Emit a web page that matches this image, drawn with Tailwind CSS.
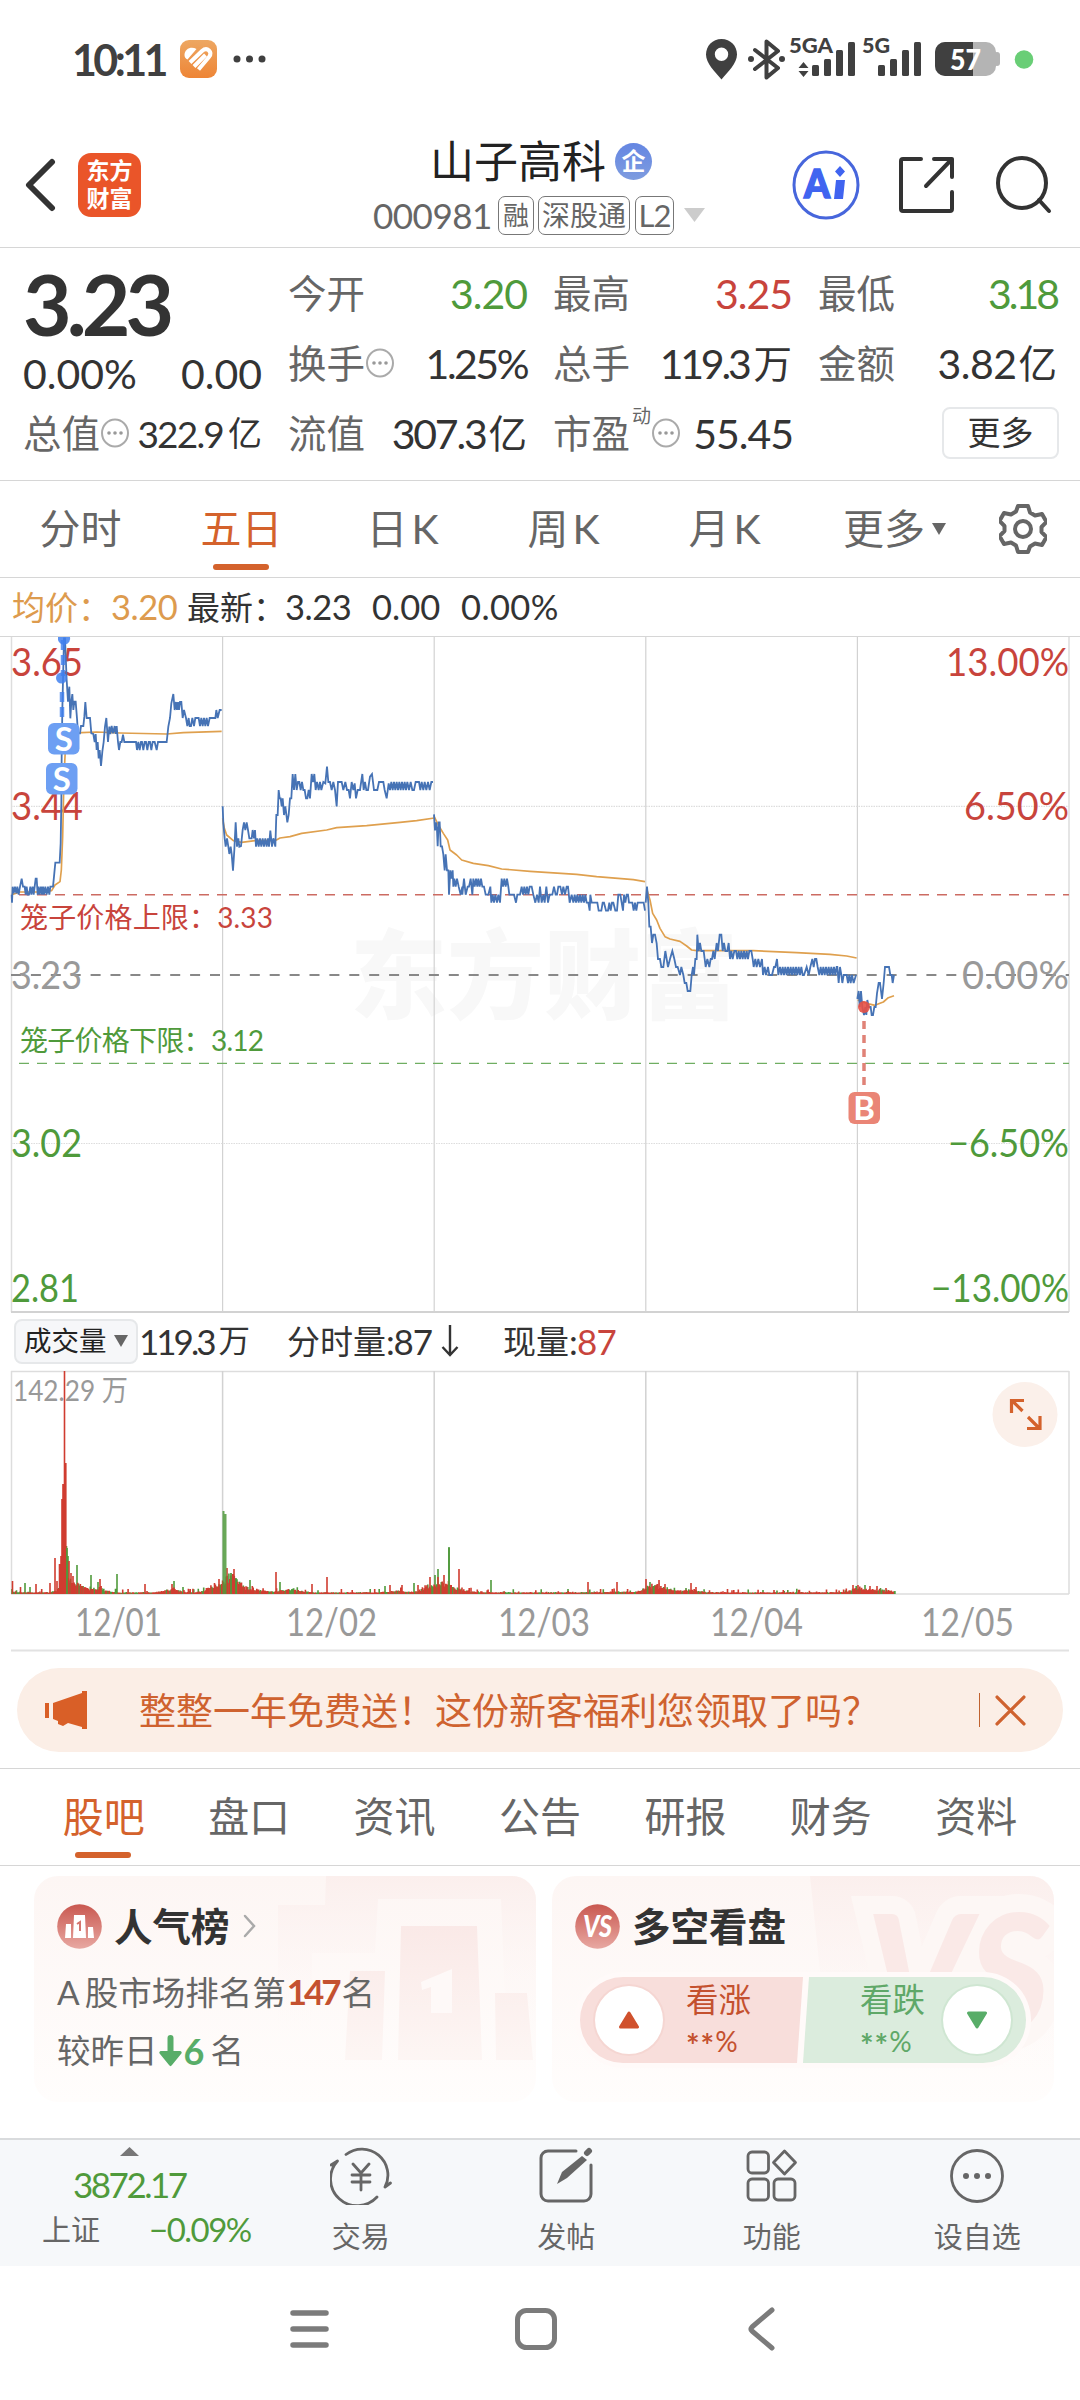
<!DOCTYPE html>
<html lang="zh-CN">
<head>
<meta charset="utf-8">
<title>山子高科 000981</title>
<script src="https://cdn.jsdelivr.net/npm/@tailwindcss/browser@4"></script>
</head>
<body class="w-[1080px] h-[2400px] overflow-hidden bg-white text-[#333] font-[Lato,'Noto_Sans_CJK_SC',sans-serif] leading-none whitespace-nowrap">

<!-- status bar -->
<div class="h-[118px] flex items-center pl-[72px] pr-[46px]">
  <span class="text-[43px] font-bold text-[#404040] tracking-[-3.600px] w-[108px]">10:11</span>
  <svg class="w-[37px] h-[38px]" viewBox="0 0 37 38"><defs><linearGradient id="hg" x2="0" y2="1"><stop stop-color="#eda762"/><stop offset="1" stop-color="#ee8536"/></linearGradient></defs><rect width="37" height="38" rx="9" fill="url(#hg)"/><path d="M4.500 15c0-6.500 7-9 12-6L7.500 19.500c-2-1-3-2.500-3-4.500z" fill="#fff"/><g stroke="#fff" fill="none" stroke-width="4"><path d="M10 22.500L22 11q4-3.500 7-.5t0 6.500L18.500 29.500"/><path d="M14 26.500L25.500 15"/></g></svg>
  <svg class="w-[34px] h-[10px] ml-[16px]" viewBox="0 0 34 10" fill="#404040"><circle cx="4" cy="5" r="3.500"/><circle cx="16.500" cy="5" r="3.500"/><circle cx="29" cy="5" r="3.500"/></svg>
  <svg class="w-[330px] h-[60px] ml-auto" viewBox="704 29 330 60" fill="#404040">
    <path fill-rule="evenodd" d="M721.500 39c-9 0-15.500 7-15.500 15.500 0 9 9 17 15.500 25 6.500-8 15.500-16 15.500-25C737 46 730.500 39 721.500 39zm0 8.500a6.700 6.700 0 1 1 0 13.400 6.700 6.700 0 0 1 0-13.400z"/>
    <path d="M755 50l23 18-11.500 9.500v-36L778 51 755 69" fill="none" stroke="#404040" stroke-width="4" stroke-linejoin="round" stroke-linecap="round"/>
    <circle cx="751" cy="59" r="3"/><circle cx="782" cy="59" r="3"/>
    <text x="789" y="53" font-size="20" font-weight="900" textLength="44" lengthAdjust="spacingAndGlyphs">5GA</text>
    <path d="M803.500 62l5 6h-10zM803.500 77l5-6h-10z"/>
    <rect x="812" y="65" width="7" height="11" rx="1.500"/><rect x="824" y="59" width="7" height="17" rx="1.500"/><rect x="836" y="50" width="7" height="26" rx="1.500"/><rect x="848" y="42" width="7" height="34" rx="1.500"/>
    <text x="862" y="53" font-size="20" font-weight="900" textLength="28" lengthAdjust="spacingAndGlyphs">5G</text>
    <rect x="878" y="65" width="7" height="11" rx="1.500"/><rect x="890" y="59" width="7" height="17" rx="1.500"/><rect x="902" y="50" width="7" height="26" rx="1.500"/><rect x="914" y="42" width="7" height="34" rx="1.500"/>
    <rect x="935" y="42" width="61" height="34" rx="10" fill="#b4b4b4"/><rect x="994" y="52" width="6" height="14" rx="3" fill="#b4b4b4"/>
    <path d="M973 42h-28a10 10 0 0 0-10 10v14a10 10 0 0 0 10 10h28z"/>
    <text x="950" y="69.500" font-size="29" font-weight="900" fill="#fff" textLength="31" lengthAdjust="spacingAndGlyphs">57</text>
    <circle cx="1024" cy="59.500" r="9.300" fill="#69ce76"/>
  </svg>
</div>

<!-- title bar -->
<header class="relative h-[130px] border-b border-[#d6d6d6] flex items-center justify-between pl-[24px] pr-[26px] pt-[5px] pb-[1px]">
  <div class="flex items-center gap-[22px]">
    <svg class="w-[32px] h-[54px]" viewBox="0 0 32 54" fill="none" stroke="#333" stroke-width="6" stroke-linecap="round" stroke-linejoin="round"><path d="M28 4L5 27l23 23"/></svg>
    <div class="w-[63px] h-[64px] rounded-[13px] bg-[#ea5529] text-white text-[23px] leading-[28px] font-bold text-center pt-[3px]">东方<br>财富</div>
  </div>
  <div class="absolute left-[373px] top-[18px]">
    <div class="flex items-center pl-[57px] h-[50px]">
      <h1 class="text-[44px] text-[#222]">山子高科</h1>
      <span class="w-[37px] h-[37px] ml-[9px] rounded-full bg-linear-to-b from-[#6586e2] to-[#7e9cdf] text-white text-[24px] leading-[36px] text-center font-bold">企</span>
    </div>
    <div class="flex items-center h-[40px] mt-[9px] text-[#666]">
      <span class="text-[35px] w-[125px] tracking-[-0.500px]">000981</span>
      <span class="w-[36px] h-[39px] border border-[#777] rounded-[7px] text-[26px] leading-[37px] text-center">融</span>
      <span class="w-[92px] h-[39px] ml-[4px] border border-[#777] rounded-[7px] text-[28px] leading-[37px] text-center">深股通</span>
      <span class="w-[39px] h-[39px] ml-[5px] border border-[#777] rounded-[7px] text-[31px] leading-[37px] text-center tracking-[-1px]">L2</span>
      <svg class="w-[21px] h-[14px] ml-[10px]" viewBox="0 0 21 14"><path d="M0 0h21L10.500 14z" fill="#ccc"/></svg>
    </div>
  </div>
  <div class="flex items-center">
    <svg class="w-[68px] h-[70px]" viewBox="0 0 68 70"><ellipse cx="34" cy="35" rx="32" ry="33" fill="none" stroke="#4766dc" stroke-width="3"/><text x="12" y="47.500" font-size="40" font-weight="900" fill="#4064f0" stroke="#4064f0" stroke-width="1.500" textLength="26" lengthAdjust="spacingAndGlyphs">A</text><path d="M44 30h9l-2 19h-9zM48 16l5 5.500-5 5.500-5-5.500z" fill="#4064f0"/></svg>
    <svg class="w-[56px] h-[58px] ml-[39px]" viewBox="0 0 56 58" fill="none" stroke="#333" stroke-width="4" stroke-linecap="round" stroke-linejoin="round"><path d="M22 3H4a2 2 0 0 0-2 2v48a2 2 0 0 0 2 2h47a2 2 0 0 0 2-2V36M35 3h18v18M53 3L27 30"/></svg>
    <svg class="w-[58px] h-[60px] ml-[41px]" viewBox="0 0 58 60" fill="none" stroke="#333" stroke-width="4" stroke-linecap="round"><ellipse cx="26" cy="28" rx="24" ry="25"/><path d="M43 45l10 11"/></svg>
  </div>
</header>

<!-- quote -->
<section class="h-[233px] border-b border-[#d6d6d6] pl-[23px] pr-[23px] pt-[10px] grid grid-cols-4 gap-x-[26px] grid-rows-[70px_70px_70px] content-start text-[38.500px]">
  <div class="flex items-center pt-[21px] text-[84px] font-bold tracking-[-5px]">3.23</div>
  <div class="flex items-center justify-between"><span class="text-[#666]">今开</span><span class="text-[41px] text-[#4f9a3b] tracking-[-1px]">3.20</span></div>
  <div class="flex items-center justify-between"><span class="text-[#666]">最高</span><span class="text-[41px] text-[#c8443c] tracking-[-1px]">3.25</span></div>
  <div class="flex items-center justify-between"><span class="text-[#666]">最低</span><span class="text-[41px] text-[#4f9a3b] tracking-[-3px]">3.18</span></div>

  <div class="flex items-center justify-between pt-[21px] text-[41px]"><span>0.00%</span><span>0.00</span></div>
  <div class="flex items-center justify-between"><span class="flex items-center text-[#666]">换手<svg class="w-[28px] h-[30px] ml-[1px]" viewBox="0 0 28 30"><ellipse cx="14" cy="15" rx="13" ry="13.500" fill="none" stroke="#aaa" stroke-width="2"/><g fill="#999"><circle cx="8" cy="15" r="1.800"/><circle cx="14" cy="15" r="1.800"/><circle cx="20" cy="15" r="1.800"/></g></svg></span><span class="text-[41px] tracking-[-2.500px]">1.25%</span></div>
  <div class="flex items-center justify-between"><span class="text-[#666]">总手</span><span class="flex items-center"><span class="text-[41px] tracking-[-3.200px] mr-[5px]">119.3</span>万</span></div>
  <div class="flex items-center justify-between"><span class="text-[#666]">金额</span><span class="flex items-center"><span class="text-[41px] tracking-[-0.500px] mr-[2px]">3.82</span>亿</span></div>

  <div class="flex items-center justify-between"><span class="flex items-center text-[#666]">总值<svg class="w-[28px] h-[30px] ml-[1px]" viewBox="0 0 28 30"><ellipse cx="14" cy="15" rx="13" ry="13.500" fill="none" stroke="#aaa" stroke-width="2"/><g fill="#999"><circle cx="8" cy="15" r="1.800"/><circle cx="14" cy="15" r="1.800"/><circle cx="20" cy="15" r="1.800"/></g></svg></span><span class="flex items-center text-[34px]"><span class="text-[37px] tracking-[-1.800px] mr-[5px]">322.9</span>亿</span></div>
  <div class="flex items-center justify-between"><span class="text-[#666]">流值</span><span class="flex items-center"><span class="text-[41px] tracking-[-2.200px] mr-[3px]">307.3</span>亿</span></div>
  <div class="flex items-center justify-between"><span class="flex items-center text-[#666]">市盈<span class="text-[19px] self-start ml-[2px] -mt-[8px]">动</span><svg class="w-[28px] h-[30px] ml-[1px]" viewBox="0 0 28 30"><ellipse cx="14" cy="15" rx="13" ry="13.500" fill="none" stroke="#aaa" stroke-width="2"/><g fill="#999"><circle cx="8" cy="15" r="1.800"/><circle cx="14" cy="15" r="1.800"/><circle cx="20" cy="15" r="1.800"/></g></svg></span><span class="text-[41px] tracking-[-1px] -mr-[1px]">55.45</span></div>
  <div class="flex items-center justify-end"><span class="w-[117px] h-[52px] -mr-[2px] border-2 border-[#e6e8ea] rounded-[8px] text-[33px] leading-[47px] text-center">更多</span></div>
</section>

<!-- chart period tabs -->
<nav class="h-[97px] border-b border-[#d6d6d6] flex items-center text-[41px] text-[#666]">
  <span class="w-[161px] text-center -mt-[2px]">分时</span>
  <span class="relative w-[161px] h-full flex items-center justify-center pb-[2px] text-[#d4622c]">五日<i class="absolute bottom-[7px] left-[52px] w-[56px] h-[6px] rounded-full bg-[#d4622c]"></i></span>
  <span class="w-[161px] text-center -mt-[2px]">日<span class="ml-[4px]">K</span></span>
  <span class="w-[161px] text-center -mt-[2px]">周<span class="ml-[4px]">K</span></span>
  <span class="w-[161px] text-center -mt-[2px]">月<span class="ml-[4px]">K</span></span>
  <span class="ml-[38px] -mt-[2px]">更多</span>
  <svg class="w-[14px] h-[12px] ml-[7px]" viewBox="0 0 14 12"><path d="M0 0h14L7 12z" fill="#666"/></svg>
  <svg class="w-[48px] h-[50px] ml-[53px]" viewBox="-24 -25 48 50" fill="none" stroke="#666" stroke-width="4" stroke-linejoin="round"><path d="M-5-23H5l2 6.500 5 3 7-1.500 4.500 8-5 5v5l5 5-4.500 8-7-1.500-5 3L5 23H-5l-2-6.500-5-3-7 1.500-4.500-8 5-5v-5l-5-5 4.500-8 7 1.500 5-3z"/><circle r="8"/></svg>
</nav>

<!-- latest price line -->
<div class="h-[59px] border-b border-[#d6d6d6] flex items-center pl-[12px] text-[33px]">
  <span class="w-[99px] text-[#dd9b4e]">均价：</span><span class="w-[76px] text-[34.500px] text-[#dd9b4e] tracking-[-0.500px]">3.20</span>
  <span class="w-[98px]">最新：</span><span class="w-[87px] text-[34.500px] tracking-[-0.500px]">3.23</span><span class="w-[89px] text-[34.500px]">0.00</span><span class="text-[34.500px] tracking-[0.400px]">0.00%</span>
</div>

<!-- price chart -->
<svg class="block w-[1080px] h-[677px]" viewBox="0 637 1080 677">
  <text x="350" y="1011" font-size="97" font-weight="900" fill="#f8f8f8" textLength="388">东方财富</text>
  <g stroke="#d2d2d2" stroke-width="1.200" fill="none">
    <path d="M11.500 637V1312M1069 637V1312" stroke="#ddd" stroke-width="1.500"/>
    <path d="M222.600 637V1312M434.200 637V1312M645.800 637V1312M857.400 637V1312"/>
    <path d="M11 1312H1069" stroke-width="2"/>
    <path d="M11 806.300H1069M11 1143.500H1069" stroke-dasharray="1.500 1"  stroke="#ddd"/>
  </g>
  <path d="M19 894.700H1069" stroke="#cc6b62" stroke-width="1.400" stroke-dasharray="10 8"/>
  <path d="M19 1063.400H1069" stroke="#6fae62" stroke-width="1.400" stroke-dasharray="10 8"/>
  <path d="M11 975H1069" stroke="#888" stroke-width="2" stroke-dasharray="10 9.900"/>

  <g font-size="38">
    <g fill="#c8443c"><text x="11" y="676" textLength="72" lengthAdjust="spacingAndGlyphs">3.65</text><text x="11" y="819.500" textLength="72" lengthAdjust="spacingAndGlyphs">3.44</text></g>
    <text x="11" y="988.500" textLength="71" lengthAdjust="spacingAndGlyphs" fill="#999">3.23</text>
    <g fill="#4f9a3b"><text x="11" y="1157" textLength="71" lengthAdjust="spacingAndGlyphs">3.02</text><text x="11" y="1302" textLength="68" lengthAdjust="spacingAndGlyphs">2.81</text></g>
    <g fill="#c8443c"><text x="946" y="676" textLength="123" lengthAdjust="spacingAndGlyphs">13.00%</text><text x="964" y="819.500" textLength="105" lengthAdjust="spacingAndGlyphs">6.50%</text></g>
    <text x="962" y="988.500" textLength="107" fill="#999">0.00%</text>
    <g fill="#4f9a3b"><text x="948" y="1157" textLength="121" lengthAdjust="spacingAndGlyphs">−6.50%</text><text x="931" y="1302" textLength="138" lengthAdjust="spacingAndGlyphs">−13.00%</text></g>
  </g>
  <text x="20" y="928" font-size="28" fill="#c8443c" textLength="253">笼子价格上限：3.33</text>
  <text x="20" y="1051" font-size="28" fill="#4f9a3b" textLength="244">笼子价格下限：3.12</text>

  <!-- average price -->
  <g fill="none" stroke="#dfa04e" stroke-width="5" stroke-linejoin="round">
    <g transform="translate(0,570) scale(.33333)">
      <path d="M35 974L60 966 110 966 155 962 165 945 180 935 184 900 188 800 192 620 196 540 205 500 215 492 245 488 290 486 360 489 500 492 550 488 665 484"/>
      <path d="M668 745L673 775 680 795 700 812 725 817 765 812 825 812 840 804 870 800 905 790 980 780 1010 773 1100 767 1200 757 1250 752 1303 744"/>
    </g>
    <g transform="translate(430,740) scale(.33333)">
      <path d="M12 228L25 255 40 280 53 300 60 330 80 345 95 360 130 370 175 377 215 387 300 394 440 403 500 410 610 419 645 425"/>
      <path d="M651 450L660 480 668 520 680 540 690 565 705 590 720 597 750 604 770 618 785 630 800 632 970 632 1100 638 1200 643 1250 648 1280 654"/>
      <path d="M1283 780L1295 785 1310 790 1335 796 1350 790 1360 786 1375 773 1392 767"/>
    </g>
  </g>
  <!-- price -->
  <g fill="none" stroke="#4673b5" stroke-width="5.400">
    <g transform="translate(0,570) scale(.33333)">
      <path d="M35 974L36 998 38 950 41 970 45 950 49 970 52 950 56 974 60 950 65 926 69 950 74 950 77 974 80 950 83 974 87 974 91 950 94 974 98 950 101 974 104 950 107 926 110 926 113 974 116 950 119 974 123 950 126 974 129 950 132 974 136 950 140 974 144 950 148 974 151 950 159 950 162 920 166 878 179 878 182 820 184 700 185 560 187 420 189 330 192 205 195 205 200 330 204 395 208 350 211 445 214 395 217 372 220 420 223 395 227 395 231 445 234 490 240 490 243 468 250 468 253 440 256 396 260 444 270 444 274 490 280 492 284 516 287 492 290 540 293 516 296 565 299 540 303 588 307 545 311 516 315 470 319 444 324 516 328 470 331 492 335 468 339 490 344 468 347 492 350 468 354 516 357 540 361 516 365 516 369 494 373 516 408 516 411 540 415 516 419 540 423 516 426 516 430 540 434 516 438 516 442 540 446 516 450 516 454 540 458 516 464 516 470 540 474 516 500 516 505 470 510 444 514 400 520 372 524 420 528 396 531 420 534 396 537 420 540 396 544 396 548 444 552 420 558 444 562 468 566 444 569 468 573 468 577 444 582 468 586 444 596 444 600 468 604 444 608 468 612 444 616 468 620 444 624 468 629 444 646 444 649 420 653 444 659 420 665 420"/>
      <path d="M668 709L670 760 674 805 677 830 681 805 685 830 688 852 692 830 695 852 699 902 703 840 707 757 711 830 715 805 718 830 723 828 728 780 732 757 736 780 740 757 744 780 748 805 755 805 758 780 762 805 765 780 768 830 772 805 776 830 780 805 784 830 788 805 792 830 796 805 800 830 804 805 807 830 811 782 816 830 820 805 826 830 829 735 833 735 836 660 839 685 842 685 845 709 848 685 852 735 856 709 862 757 866 735 870 685 874 685 878 612 882 660 886 612 890 660 894 636 898 636 902 660 906 636 910 660 914 660 918 685 922 685 926 660 930 685 935 612 939 636 943 612 947 660 951 636 956 660 960 636 964 660 970 636 976 640 981 590 985 636 990 636 995 660 1000 636 1005 660 1010 709 1014 636 1025 636 1030 660 1036 636 1041 660 1046 660 1050 685 1055 636 1060 660 1064 640 1068 685 1073 660 1080 660 1087 612 1091 660 1095 636 1099 660 1104 660 1110 620 1116 612 1122 660 1132 660 1137 636 1150 636 1154 660 1160 685 1166 640 1170 660 1174 636 1178 660 1182 636 1186 660 1190 636 1194 660 1198 636 1202 660 1206 636 1210 660 1214 636 1218 660 1222 636 1227 660 1232 636 1237 660 1242 660 1247 636 1257 636 1261 660 1265 636 1270 660 1274 636 1279 660 1284 636 1289 660 1294 636 1299 636"/>
    </g>
    <g transform="translate(430,740) scale(.33333)">
      <path d="M12 223L15 271 18 247 21 271 23 319 26 247 29 247 32 319 36 319 40 343 44 391 47 343 51 391 55 391 57 464 61 391 64 416 68 391 70 440 73 416 77 440 81 416 86 440 92 464 97 440 97 464 102 416 107 464 113 440 117 440 122 416 127 464 130 416 134 440 138 416 142 440 145 416 149 440 153 416 157 440 162 440 167 464 175 464 181 440 184 488 188 464 192 488 196 464 201 488 205 464 210 488 215 416 219 440 223 416 227 440 231 416 235 440 238 464 252 464 258 488 262 464 270 464 275 440 279 464 283 440 287 464 291 440 295 464 299 440 305 440 310 464 316 488 321 464 326 488 330 440 335 488 340 464 344 488 349 440 354 488 359 464 367 464 372 440 377 464 381 464 385 440 391 440 396 464 400 440 405 464 410 440 414 440 419 488 425 464 430 488 434 464 438 488 442 464 446 488 450 464 454 488 458 464 462 488 466 464 470 488 475 488 479 512 481 464 485 488 502 488 506 512 514 512 518 488 522 488 528 512 534 512 538 488 542 512 546 488 550 488 556 512 561 512 565 464 571 464 575 488 579 512 582 464 586 488 590 464 594 464 597 488 607 488 611 512 615 488 619 512 623 488 641 488 645 512"/>
      <path d="M647 488L651 440 655 488 658 560 662 560 666 609 670 584 675 584 680 610 684 657 690 657 694 681 700 681 706 633 714 681 720 657 727 633 733 657 738 681 743 681 750 705 754 681 760 705 764 729 769 729 773 753 781 753 785 705 789 681 792 705 796 657 800 657 802 584 806 633 810 609 814 633 821 633 827 681 832 657 838 681 842 657 846 657 850 633 854 657 860 609 864 633 869 584 874 584 878 633 882 609 886 633 892 633 896 609 900 657 904 633 908 657 913 633 918 633 922 657 926 633 930 657 934 633 938 657 942 633 946 657 950 633 954 657 958 633 964 633 968 657 971 681 976 657 980 681 985 657 990 681 996 657 999 705 1004 681 1008 705 1014 681 1018 705 1026 705 1032 681 1036 681 1041 657 1045 705 1050 681 1054 705 1058 681 1062 705 1066 681 1070 705 1074 681 1078 705 1082 681 1086 705 1090 681 1094 705 1098 681 1102 705 1106 681 1110 705 1114 681 1118 705 1122 705 1130 681 1136 705 1141 681 1147 657 1151 681 1155 657 1159 657 1163 681 1168 705 1172 681 1176 705 1180 681 1184 705 1188 681 1192 705 1196 681 1200 705 1204 681 1208 705 1212 681 1216 705 1220 681 1222 681 1226 729 1230 681 1234 705 1237 729 1241 705 1250 705 1254 729 1258 705 1262 729 1266 705 1271 729 1278 705"/>
      <path d="M1282 777L1286 753 1289 801 1293 753 1297 801 1302 825 1306 801 1309 825 1312 780 1316 801 1322 801 1325 825 1329 825 1333 801 1337 801 1341 760 1346 729 1350 729 1356 777 1361 729 1365 681 1377 681 1381 705 1385 705 1388 729 1392 705"/>
    </g>
  </g>

  <!-- trade markers -->
  <g fill="#4080ee"><path d="M58 637h12a6 6 0 0 1-12 3z" opacity=".85"/><circle cx="61.500" cy="678" r="5.500" opacity=".85"/></g>
  <path d="M63 640V676M62 692V720" stroke="#4080ee" stroke-width="4.500" stroke-dasharray="10 5" opacity=".8"/>
  <g font-weight="700" font-size="33" text-anchor="middle">
    <rect x="48" y="723" width="31.500" height="31.500" rx="6" fill="#6d9ff3"/><text x="63.700" y="750.500" fill="#fff">S</text>
    <rect x="46" y="763" width="31.500" height="31.500" rx="6" fill="#6d9ff3"/><text x="61.700" y="790.500" fill="#fff">S</text>
    <circle cx="864" cy="1007" r="6" fill="#e75145" opacity=".9"/>
    <path d="M864 1021V1085" stroke="#e08277" stroke-width="3.500" stroke-dasharray="8 6"/>
    <rect x="848.500" y="1092" width="31.500" height="32" rx="6" fill="#ea8576"/><text x="864.200" y="1119.500" fill="#fff">B</text>
  </g>
</svg>

<!-- volume header -->
<div class="h-[56px] flex items-center pl-[14px] pb-[2px] text-[33px]">
  <span class="w-[124px] h-[45px] flex items-center pl-[8px] rounded-[8px] border-2 border-[#e6e8ea] bg-[#f6f7f9] text-[27.500px] text-[#222]">成交量<svg class="w-[14px] h-[12px] ml-[7px]" viewBox="0 0 14 12"><path d="M0 0h14L7 12z" fill="#666"/></svg></span>
  <span class="w-[148px] ml-[1px] flex items-center text-[31.500px]"><span class="text-[35px] tracking-[-3px]">119.3</span><span class="ml-[5px]">万</span></span>
  <span class="w-[216px] flex items-center">分时量<span class="text-[35px] tracking-[-1.200px]">:87</span><svg class="w-[18px] h-[32px] ml-[9px]" viewBox="0 0 18 32" fill="none" stroke="#333" stroke-width="2.400"><path d="M9 0v30M1.500 22L9 30l7.500-8"/></svg></span>
  <span class="flex items-center">现量<span class="text-[35px] tracking-[-0.800px]">:<span class="text-[#c8443c]">87</span></span></span>
</div>

<!-- volume chart -->
<svg class="block w-[1080px] h-[282px]" viewBox="0 1370 1080 282">
  <g stroke="#ddd" stroke-width="1.500" fill="none">
    <path d="M11 1371.500H1069M11.500 1371V1594M1069 1371V1594M11 1594H1069"/>
    <path d="M222.600 1371V1594M434.200 1371V1594M645.800 1371V1594M857.400 1371V1594" stroke="#d2d2d2"/>
    <path d="M11 1650.500H1069" stroke="#e2e2e2" stroke-width="2"/>
  </g>
  <text x="13" y="1401" font-size="29" fill="#999" textLength="115" lengthAdjust="spacingAndGlyphs">142.29 万</text>
  <path id="volDown" stroke="#4f9a3b" stroke-width="1.600"/>
  <path id="volUp" stroke="#d03c30" stroke-width="1.600"/>
  <path id="volTop" stroke="#4f9a3b" stroke-width="2" opacity=".85"/>
  <g font-size="38" fill="#999" ><text x="75" y="1636" textLength="87" lengthAdjust="spacingAndGlyphs">12/01</text><text x="286" y="1636" textLength="91" lengthAdjust="spacingAndGlyphs">12/02</text><text x="498" y="1636" textLength="92" lengthAdjust="spacingAndGlyphs">12/03</text><text x="710" y="1636" textLength="93" lengthAdjust="spacingAndGlyphs">12/04</text><text x="921" y="1636" textLength="93" lengthAdjust="spacingAndGlyphs">12/05</text></g>
  <ellipse cx="1025" cy="1414.500" rx="32.500" ry="32.500" fill="#fbf0ea"/>
  <path d="M1022.500 1411l-10-10M1011.500 1413v-12.500h12.500M1028 1417l11 11M1040 1416v12.500h-13" fill="none" stroke="#d4622c" stroke-width="3.200"/>
</svg>
<script>
  // minute bars: base noise plus the session's peaks, [x, height]
  const base = 1594, up = [], down = [], top2 = [];
  let seed = 7;
  const rnd = () => (seed = (seed * 16807) % 2147483647) / 2147483647;
  const bar = (list, x, h) => list.push(`M${x.toFixed(1)} ${base}v${-h.toFixed(1)}`);
  const swell = [[68,14,9],[80,7,9],[98,6,9],[172,4,10],[212,7,9],[230,18,10],[245,6,18],[290,4,14],[430,9,10],[445,9,9],[455,4,16],[650,7,9],[663,6,12],[690,3,12],[858,5,9],[878,4,16],[398,2,12],[620,1,14]];
  for (let x = 12; x < 895; x += 0.9) {
    let h = 1.2 + (rnd() < 0.15 ? rnd() * 4 : rnd() * 0.7);
    for (const [c, a, w] of swell) h += a * Math.exp(-(((x - c) / w) ** 2)) * (0.35 + 0.65 * rnd());
    bar(rnd() < 0.6 ? up : down, x, h);
  }
  [[12.500,13],[20.500,7],[36,10],[50,11],[55,36],[57,13],[59.500,30],[61,38],[62,95],[63,110],[64.500,223],[65.800,131],[69,33],[71,21],[73,18],[100,15],[145,10],[172,10],[219,15],[227,26],[234,25],[276,22],[312,10],[327,17],[390,9],[402,9],[418,9],[430,17],[438,17],[444,19],[459,25],[588,12],[617,12],[646,15],[659,14],[665,10],[691,11],[696,7],[774,4],[853,9],[858,9],[870,8],[877,8],[886,6]].forEach(b => bar(up, ...b));
  [[25,11],[30,7],[66.500,48],[68,38],[77,29],[91,19],[98,12],[117,20],[174,13],[183,7],[236,16],[250,14],[280,12],[385,8],[414,11],[435,19],[438,25],[449,47],[491,14],[568,5],[650,12],[655,9],[686,6],[763,4],[865,9]].forEach(b => bar(down, ...b));
  [[223.500,83],[225.500,80],[231,21],[449,46],[67,46]].forEach(b => bar(top2, ...b));
  document.getElementById('volUp').setAttribute('d', up.join(''));
  document.getElementById('volDown').setAttribute('d', down.join(''));
  document.getElementById('volTop').setAttribute('d', top2.join(''));
</script>

<!-- promotion banner -->
<div class="mt-[16px] mx-[17px] h-[84px] rounded-full bg-[#fbeee6] flex items-center pl-[28px] pr-[37px] text-[#cf622f]">
  <svg class="w-[42px] h-[38px]" viewBox="0 0 42 38" fill="#d95f27"><path d="M0 12h4v15H0zM8 12L37 2V0h5v38h-5v-2l-14-4-5 3-5-2v-3l-5-2z"/></svg>
  <span class="ml-[52px] text-[37px]">整整一年免费送！这份新客福利您领取了吗？</span>
  <i class="ml-auto w-[1px] h-[34px] bg-[#c0622f]"></i>
  <svg class="w-[31px] h-[31px] ml-[15px]" viewBox="0 0 30 30" stroke="#cf622f" stroke-width="3.200" stroke-linecap="round"><path d="M2 2l26 26M28 2L2 28"/></svg>
</div>

<!-- section tabs -->
<nav class="mt-[16px] h-[98px] mb-[1px] border-y border-[#d6d6d6] px-[31px] grid grid-cols-7 items-center text-center text-[41px] text-[#666]">
  <span class="relative h-full flex items-center justify-center pb-[2px] text-[#d4622c]">股吧<i class="absolute bottom-[7px] left-[44px] w-[56px] h-[6px] rounded-full bg-[#d4622c]"></i></span>
  <span class="-mt-[2px]">盘口</span><span class="-mt-[2px]">资讯</span><span class="-mt-[2px]">公告</span><span class="-mt-[2px]">研报</span><span class="-mt-[2px]">财务</span><span class="-mt-[2px]">资料</span>
</nav>

<!-- cards -->
<div class="mt-[10px] pl-[34px] pr-[26px] h-[262px] grid grid-cols-2 gap-[16px] items-start">
  <section class="relative h-[226px] rounded-[24px] bg-linear-to-b from-[#fdf6f4] to-[#fffdfc] overflow-hidden pl-[23px]">
    <svg class="absolute inset-0 w-[502px] h-[226px]" viewBox="34 1877 502 226">
      <defs><linearGradient id="wm" x2="0" y2="1"><stop stop-color="#fae9e7"/><stop offset="1" stop-color="#fdf6f4"/></linearGradient><linearGradient id="wf" x2="0" y2="1"><stop stop-color="#fbefed"/><stop offset="1" stop-color="#fef9f8" stop-opacity="0"/></linearGradient></defs>
      <path d="M326 1877h210v150h-30l-5-127H378l-3 54h-63v80h-34V1906h47z" fill="url(#wf)"/>
      <path d="M350 1972h35l-3 89h-37zM401 1927h76l5 134h-84zM495 1994h32l6 67h-37z" fill="url(#wm)"/>
      <path d="M421 1983l31-13v44h-21v-26l-9 3z" fill="#fef9f8"/>
    </svg>
    <div class="relative flex items-center h-[46px] mt-[27px]">
      <svg class="w-[45px] h-[45px]" viewBox="0 0 45 45"><defs><linearGradient id="rg" x2="0" y2="1"><stop stop-color="#c95850"/><stop offset="1" stop-color="#e8a8a2"/></linearGradient></defs><circle cx="22.500" cy="22.500" r="22.300" fill="url(#rg)"/><path d="M9 20h5v14H8zM17 11h11l1 23H16zM31 23h5l1 11h-6z" fill="#fff"/><path d="M20 20l3-2v9" fill="none" stroke="#d4766f" stroke-width="2"/></svg>
      <h2 class="ml-[12px] text-[38.500px] font-bold">人气榜</h2>
      <svg class="w-[14px] h-[24px] ml-[13px]" viewBox="0 0 14 24" fill="none" stroke="#aaa" stroke-width="2.500" stroke-linecap="round"><path d="M2 2l9 10-9 10"/></svg>
    </div>
    <p class="relative mt-[25px] text-[33.500px] h-[34px] text-[#666]">A<span class="ml-[5px]">股市场排名第</span><b class="text-[35px] text-[#c4512f] tracking-[-3px] ml-[1px]">147</b><span class="ml-[3px]">名</span></p>
    <p class="relative mt-[26px] text-[33.500px] h-[34px] text-[#666] flex items-center">较昨日<svg class="w-[23px] h-[32px] ml-[1px]" viewBox="0 0 23 32" fill="#58ad68"><path d="M11.500 0a3 3 0 0 1 3 3v13h6c2 0 3 1.500 1.500 3L13 30c-1 1.500-2 1.500-3 0L1 19c-1.500-1.500-.5-3 1.500-3h6V3a3 3 0 0 1 3-3z"/></svg><b class="text-[36px] text-[#58ad68] ml-[2px]">6</b><span class="ml-[6px]">名</span></p>
  </section>

  <section class="relative h-[226px] rounded-[24px] bg-linear-to-b from-[#fdf6f4] to-[#fffdfc] overflow-hidden pl-[23px]">
    <svg class="absolute inset-0 w-[502px] h-[226px]" viewBox="552 1877 502 226">
      <path d="M810 1877h250v190H830z" fill="url(#wf)"/>
      <text x="866" y="2034" font-weight="900" font-style="italic" font-size="164" textLength="184" lengthAdjust="spacingAndGlyphs" paint-order="stroke" stroke="#fdf7f5" stroke-width="36" fill="#fae9e7">VS</text>
    </svg>
    <div class="relative flex items-center h-[46px] mt-[27px]">
      <svg class="w-[45px] h-[45px]" viewBox="0 0 45 45"><circle cx="22.500" cy="22.500" r="22.300" fill="url(#rg)"/><text x="8" y="33" font-size="30" font-weight="900" font-style="italic" fill="#fff" textLength="29" lengthAdjust="spacingAndGlyphs">VS</text></svg>
      <h2 class="ml-[12px] text-[38.500px] font-bold">多空看盘</h2>
    </div>
    <div class="relative w-[456px] h-[96px] mt-[23px] p-[5px] rounded-full bg-[#fffaf9]">
      <div class="relative h-[86px] rounded-full overflow-hidden flex">
        <svg class="absolute inset-0 w-[446px] h-[86px]" viewBox="0 0 446 86"><path d="M0 0h223l-6 86H0z" fill="#f8dedb"/><path d="M229 0h217v86H223z" fill="#dbecdd"/></svg>
        <div class="relative flex w-1/2 items-center pl-[15px]">
          <span class="w-[68px] h-[68px] rounded-full bg-white flex items-center justify-center ring-2 ring-[#f5d6d2]"><svg class="w-[22px] h-[18px]" viewBox="0 0 22 18"><path d="M11 2l8.500 14h-17z" fill="#d0512d" stroke="#d0512d" stroke-width="3" stroke-linejoin="round"/></svg></span>
          <div class="ml-[23px] text-[#c4512f]"><div class="text-[32.500px] h-[43px]">看涨</div><div class="text-[28px] h-[30px] flex"><b class="text-[32px] translate-y-[3px] tracking-[1px]">**</b>%</div></div>
        </div>
        <div class="relative flex w-1/2 items-center justify-end pr-[15px]">
          <div class="mr-[18px] text-[#5fa868]"><div class="text-[32.500px] h-[43px]">看跌</div><div class="text-[28px] h-[30px] flex"><b class="text-[32px] translate-y-[3px] tracking-[1px]">**</b>%</div></div>
          <span class="w-[68px] h-[68px] rounded-full bg-white flex items-center justify-center ring-2 ring-[#cfe6d2]"><svg class="w-[22px] h-[18px]" viewBox="0 0 22 18"><path d="M11 16l8.500-14h-17z" fill="#58ad68" stroke="#58ad68" stroke-width="3" stroke-linejoin="round"/></svg></span>
        </div>
      </div>
    </div>
  </section>
</div>

<!-- bottom toolbar -->
<footer class="h-[128px] border-t-2 border-[#d9dbdd] bg-[#f6f8fa] flex text-[29px] text-[#666]">
  <div class="w-[258px] flex flex-col">
    <svg class="w-[19px] h-[9px] mt-[7px] ml-[120px]" viewBox="0 0 19 9"><path d="M0 9h19L9.500 0z" fill="#777"/></svg>
    <span class="mt-[11px] ml-[73px] text-[35px] h-[35px] text-[#4f9a3b] tracking-[-2.500px]">3872.17</span>
    <span class="mt-[11px] ml-[42px] flex h-[32px] items-center"><span class="w-[107px]">上证</span><span class="text-[33px] text-[#4f9a3b] tracking-[-1.500px]">−0.09%</span></span>
  </div>
  <div class="flex-1 flex flex-col items-center"><svg class="w-[62px] h-[58px] mt-[7px]" viewBox="-31 -29 62 58" fill="none" stroke="#666" stroke-width="2.800" stroke-linecap="round" stroke-linejoin="round"><path d="M-15-21.500A26 26 0 0 1 24 11l5.500-4M-30-11l6.500-4A26 26 0 0 0 16 21M-8-12L0-3l8-9M0-3v17M-9-1H9M-9 6H9"/></svg><span class="mt-[17px]">交易</span></div>
  <div class="flex-1 flex flex-col items-center"><svg class="w-[54px] h-[58px] mt-[7px]" viewBox="-27 -29 54 58" fill="none" stroke="#666" stroke-width="3" stroke-linecap="round"><path d="M10-25h-28a7 7 0 0 0-7 7v36a7 7 0 0 0 7 7h36a7 7 0 0 0 7-7V-11"/><path d="M-9 8l5-12L16-20l5 4L1 2z" fill="#666" stroke="none"/><path d="M21-23l2-2" stroke-width="6"/></svg><span class="mt-[17px]">发帖</span></div>
  <div class="flex-1 flex flex-col items-center"><svg class="w-[54px] h-[58px] mt-[7px]" viewBox="-27 -29 54 58" fill="none" stroke="#666" stroke-width="2.800" stroke-linejoin="round"><rect x="-24" y="-24" width="20.500" height="21" rx="4"/><rect x="-24" y="3" width="20.500" height="21" rx="4"/><rect x="2" y="3" width="21" height="21" rx="4"/><path d="M12.500-25l11 11.500-11 11.500-11-11.500z"/></svg><span class="mt-[17px]">功能</span></div>
  <div class="flex-1 flex flex-col items-center"><svg class="w-[54px] h-[58px] mt-[7px]" viewBox="-27 -29 54 58" fill="none" stroke="#666" stroke-width="2.800"><circle r="25.500"/><g fill="#666" stroke="none"><circle cx="-11" r="3"/><circle r="3"/><circle cx="11" r="3"/></g></svg><span class="mt-[17px]">设自选</span></div>
</footer>

<!-- system navigation -->
<div class="h-[125px] flex items-center pl-[289px] gap-[184px]">
  <svg class="w-[41px] h-[44px]" viewBox="0 0 41 44" stroke="#7b7b7b" stroke-width="5.500" stroke-linecap="round"><path d="M4 6h33M4 22h33M4 38h33"/></svg>
  <svg class="w-[44px] h-[44px]" viewBox="0 0 44 44" fill="none" stroke="#7b7b7b" stroke-width="5"><rect x="3.500" y="3.500" width="37" height="37" rx="9"/></svg>
  <svg class="w-[30px] h-[44px] ml-[4px]" viewBox="0 0 30 44" fill="none" stroke="#7b7b7b" stroke-width="5" stroke-linecap="round" stroke-linejoin="round"><path d="M26 3L6 20q-2 2 0 4l20 17"/></svg>
</div>
</body>
</html>
